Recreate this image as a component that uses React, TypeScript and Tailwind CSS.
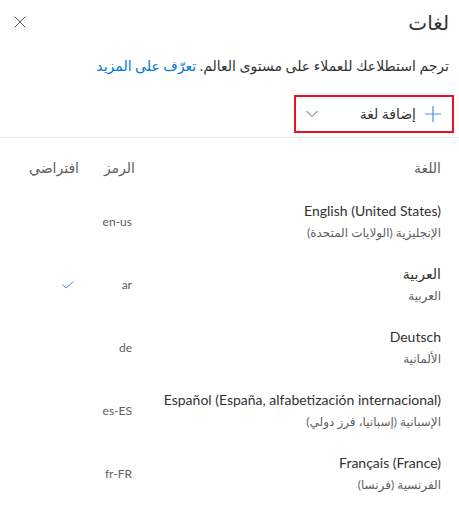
import React from 'react';

interface LanguageRow {
  name: string;
  localName: string;
  code: string;
  isDefault?: boolean;
}

const languages: LanguageRow[] = [
  { name: 'English (United States)', localName: 'الإنجليزية (الولايات المتحدة)', code: 'en-us' },
  { name: 'العربية', localName: 'العربية', code: 'ar', isDefault: true },
  { name: 'Deutsch', localName: 'الألمانية', code: 'de' },
  { name: 'Español (España, alfabetización internacional)', localName: 'الإسبانية (إسبانيا، فرز دولي)', code: 'es-ES' },
  { name: 'Français (France)', localName: 'الفرنسية (فرنسا)', code: 'fr-FR' },
];

const App: React.FC = () => {
  return (
    <div
      dir="rtl"
      className="w-[459px] h-[505px] overflow-hidden bg-white text-[#323130]"
      style={{ fontFamily: '"Segoe UI", Lato, "DejaVu Sans", sans-serif' }}
    >
      {/* Header */}
      <div className="flex items-center justify-between pt-[8px] pr-[10px] pl-[14px]">
        <h1 className="text-[20px] leading-[28px] font-normal">لغات</h1>
        <button className="w-[12px] h-[12px] text-[#605e5c]">
          <svg viewBox="0 0 12 12" width="12" height="12" fill="none" stroke="currentColor" strokeWidth="1">
            <path d="M0.5 0.5 L11.5 11.5 M11.5 0.5 L0.5 11.5" />
          </svg>
        </button>
      </div>

      <p className="mt-[20px] pr-[10px] text-[14px] leading-[20px]">
        ترجم استطلاعك للعملاء على مستوى العالم. <a className="text-[#0078d4]">تعرّف على المزيد</a>
      </p>

      {/* Command bar */}
      <div className="mt-[19px] pb-[4px] border-b border-[#edebe9]">
        <div className="mr-[5px] w-[160px] h-[38px] border-2 border-[#e81123] flex items-center pr-[11px] pl-[10px]">
          <svg viewBox="0 0 16 16" width="16" height="16" fill="none" stroke="#4f8fdf" strokeWidth="1.2">
            <path d="M8 0 V16 M0 8 H16" />
          </svg>
          <span className="mr-[9px] text-[14px] leading-[20px]">إضافة لغة</span>
          <svg className="mr-auto" viewBox="0 0 12 8" width="12" height="8" fill="none" stroke="#605e5c" strokeWidth="1">
            <path d="M0.5 1 L6 6.5 L11.5 1" />
          </svg>
        </div>
      </div>

      {/* Table */}
      <div className="mt-[20px] pr-[18px] pl-[18px]">
        <div className="flex h-[20px] items-center text-[14px] leading-[20px] text-[#605e5c]">
          <div className="flex-1">اللغة</div>
          <div className="w-[56px]">الرمز</div>
          <div className="w-[61px]">افتراضي</div>
        </div>
        <div className="mt-[12px]">
          {languages.map((lang) => (
            <div key={lang.code} className="flex items-center h-[63px]">
              <div className="flex-1 flex flex-col">
                <span className="text-[14px] leading-[20px]">{lang.name}</span>
                <span className="mt-[3px] text-[12px] leading-[18px] text-[#605e5c]">{lang.localName}</span>
              </div>
              <div className="w-[56px] pr-[3px] text-[12px] text-[#605e5c]">{lang.code}</div>
              <div className="w-[61px] pr-[5px] flex">
                {lang.isDefault && (
                  <svg viewBox="0 0 12 8" width="12" height="8" fill="none" stroke="#4f7fd6" strokeWidth="1">
                    <path d="M0.5 3.5 L4 7 L11.5 0.5" />
                  </svg>
                )}
              </div>
            </div>
          ))}
        </div>
      </div>
    </div>
  );
};

export default App;
